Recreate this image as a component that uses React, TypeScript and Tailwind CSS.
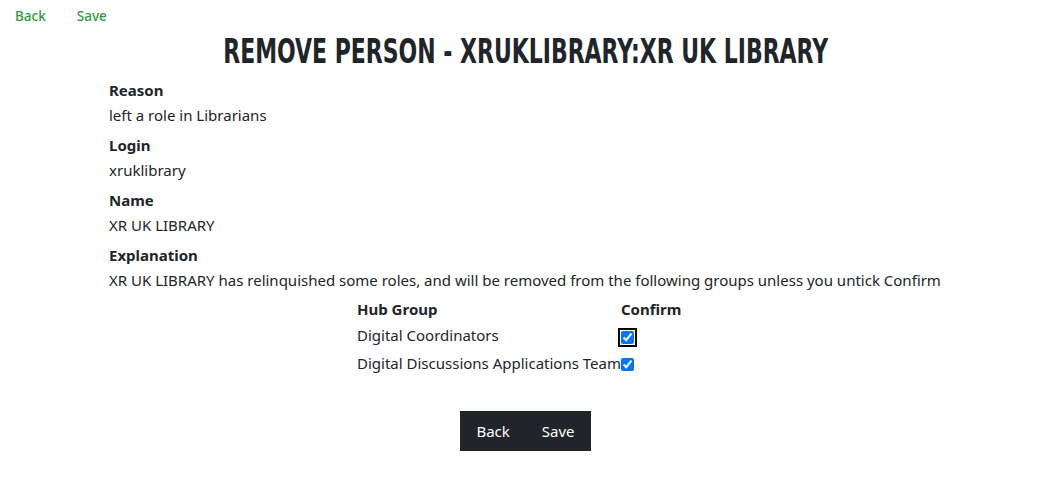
import React from 'react'

const FIELDS: { label: string; value: string }[] = [
  { label: 'Reason', value: 'left a role in Librarians' },
  { label: 'Login', value: 'xruklibrary' },
  { label: 'Name', value: 'XR UK LIBRARY' },
  {
    label: 'Explanation',
    value:
      'XR UK LIBRARY has relinquished some roles, and will be removed from the following groups unless you untick Confirm',
  },
]

const GROUPS = ['Digital Coordinators', 'Digital Discussions Applications Team']

export default function App() {
  return (
    <div className="min-h-[479px] bg-white text-[#212529] font-['Noto_Sans',sans-serif] text-[15px]">
      <div className="flex h-[32px] items-center text-[13.5px] font-medium text-[#2a9d3c]">
        <a className="ml-[15px] cursor-pointer">Back</a>
        <a className="ml-[31px] cursor-pointer">Save</a>
      </div>

      <div className="flex h-[40px] items-center justify-center overflow-visible">
        <h1 className="inline-block scale-x-[0.74] whitespace-nowrap font-['DejaVu_Sans_Condensed',sans-serif] text-[33px] font-bold leading-[40px] text-[#212529]">
          REMOVE PERSON - XRUKLIBRARY:XR UK LIBRARY
        </h1>
      </div>

      <div className="flex flex-col gap-[6px] px-[109px] pt-[6px]">
        {FIELDS.map(f => (
          <div key={f.label}>
            <div className="font-bold leading-6">{f.label}</div>
            <div className="mt-px whitespace-nowrap leading-6">{f.value}</div>
          </div>
        ))}
      </div>

      <table className="mx-auto mt-[4px] border-collapse">
        <thead>
          <tr className="h-[26px]">
            <th className="p-0 text-left font-bold">Hub Group</th>
            <th className="w-[73px] p-0 text-left font-bold">Confirm</th>
          </tr>
        </thead>
        <tbody>
          {GROUPS.map((g, i) => (
            <tr key={g} className={i === 0 ? 'h-[27px]' : 'h-[28px]'}>
              <td className="whitespace-nowrap p-0">{g}</td>
              <td className="p-0">
                <input
                  type="checkbox"
                  defaultChecked
                  className={`ml-0 h-[13px] w-[13px] align-middle accent-[#0075ff] ${
                    i === 0 ? 'rounded-sm outline-2 outline-offset-1 outline-black' : ''
                  }`}
                />
              </td>
            </tr>
          ))}
        </tbody>
      </table>

      <div className="mt-[34px] flex justify-center">
        <div className="flex bg-[#212529] text-[15px] text-white">
          <button className="h-[40px] px-4">Back</button>
          <button className="h-[40px] px-4">Save</button>
        </div>
      </div>
    </div>
  )
}
